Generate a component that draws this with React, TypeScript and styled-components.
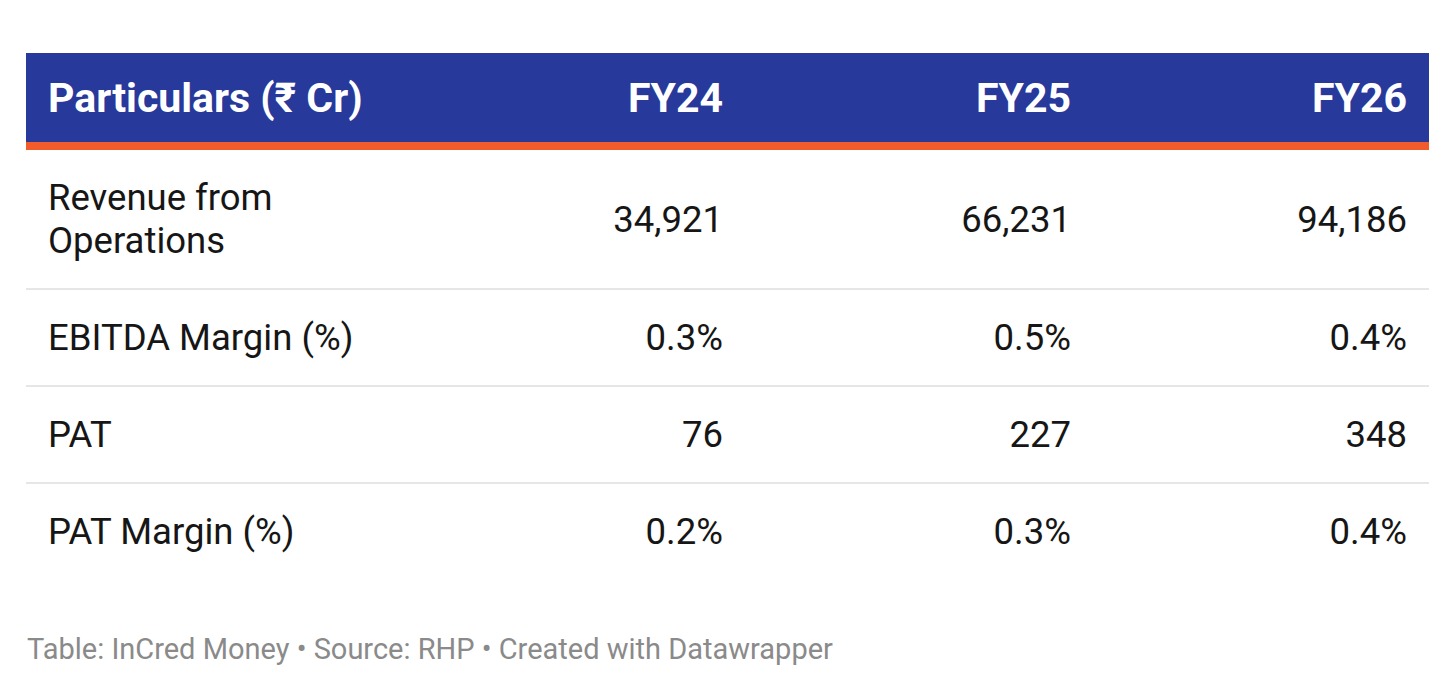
import styled, { createGlobalStyle } from "styled-components";

interface CellProps {
    align?: "left" | "right";
}

interface RowProps {
    last?: boolean;
}

const rows = [
    { label: "Revenue from Operations", values: ["34,921", "66,231", "94,186"] },
    { label: "EBITDA Margin (%)", values: ["0.3%", "0.5%", "0.4%"] },
    { label: "PAT", values: ["76", "227", "348"] },
    { label: "PAT Margin (%)", values: ["0.2%", "0.3%", "0.4%"] },
];

const years = ["FY24", "FY25", "FY26"];

const App = () => {
    return (
        <>
            <GlobalStyle />
            <Page>
                <Table>
                    <HeadRow>
                        <HeadCell align="left">Particulars (₹ Cr)</HeadCell>
                        {years.map((y) => (
                            <HeadCell key={y} align="right">
                                {y}
                            </HeadCell>
                        ))}
                    </HeadRow>
                    {rows.map((r, i) => (
                        <Row key={r.label} last={i === rows.length - 1}>
                            <Cell align="left">{r.label}</Cell>
                            {r.values.map((v, j) => (
                                <Cell key={j} align="right">
                                    {v}
                                </Cell>
                            ))}
                        </Row>
                    ))}
                </Table>
                <Footer>
                    Table: InCred Money • Source: RHP • Created with Datawrapper
                </Footer>
            </Page>
        </>
    );
};

const GlobalStyle = createGlobalStyle`
    body {
        margin: 0;
        background: #ffffff;
        font-family: Roboto, "Liberation Sans", sans-serif;
    }
`;

const Page = styled.div`
    padding: 53px 27px 0 26px;
`;

const Table = styled.div`
    display: flex;
    flex-direction: column;
`;

const HeadRow = styled.div`
    display: grid;
    grid-template-columns: 377fr 342fr 348fr 336fr;
    height: 89px;
    align-items: center;
    background: #27399a;
    border-bottom: 8px solid #f25b2a;
`;

const HeadCell = styled.div<CellProps>`
    padding: 0 22px;
    color: #ffffff;
    font-size: 41px;
    font-weight: 700;
    text-align: ${(props) => props.align};
`;

const Row = styled.div<RowProps>`
    display: grid;
    grid-template-columns: 377fr 342fr 348fr 336fr;
    align-items: center;
    border-bottom: 2px solid ${(props) => (props.last ? "transparent" : "#e6e6e6")};
`;

const Cell = styled.div<CellProps>`
    padding: 26px 22px 26px;
    color: #161616;
    font-size: 36.5px;
    line-height: 43px;
    text-align: ${(props) => props.align};
`;

const Footer = styled.div`
    margin-top: 50px;
    padding-left: 1px;
    color: #8a8a8a;
    font-size: 29px;
    line-height: 36px;
`;

export default App;
